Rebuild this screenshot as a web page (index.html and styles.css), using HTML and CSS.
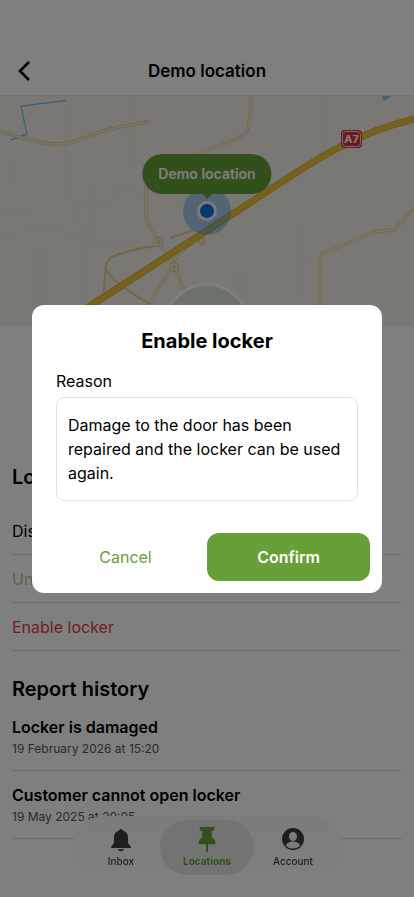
FILE: index.html
```html
<!DOCTYPE html>
<html lang="en">
<head>
    <meta charset="UTF-8">
    <meta name="viewport" content="width=device-width, initial-scale=1.0">
    <title>Demo location</title>
    <link rel="stylesheet" href="styles.css">
</head>
<body>
    <header class="header">
        <button class="back-button" aria-label="Back">
            <svg width="24" height="24" viewBox="0 0 24 24" fill="none" stroke="currentColor" stroke-width="2.6"><path d="M17 3 8 12l9 9"/></svg>
        </button>
        <h1>Demo location</h1>
    </header>

    <main>
        <div class="map">
            <svg class="map-canvas" viewBox="0 0 414 230" preserveAspectRatio="xMidYMid slice" fill="none">
                <!-- small streets -->
                <g stroke="#ece8e3" stroke-width="1">
                    <path d="M66 0v62L74 120l8 14v96M134 0v70M94 90l-4 60M14 60v30M72 108h38M115 85l-3 25M118 92l28 6M0 137l60-3 30 14 60 4M40 150v80M85 150v70M328 0l-4 60M302 130v70M300 166l14-4M240 170v60M0 118h30"/>
                </g>
                <!-- water -->
                <g stroke="#88bfe0" stroke-width="1.4">
                    <path d="M66 4.500 21 10l6 28-16 6"/>
                    <path d="M383 0l1 4 6-4z" fill="#88cfe8"/>
                </g>
                <!-- secondary roads -->
                <g stroke="#e0d39c" stroke-width="3.400" stroke-linejoin="round">
                    <path d="M0 36c20 4 40 13 60 12s30-10 50-15l40-8"/>
                    <path d="M251 0c0 15-2 28-4 35s-34 16-52 24"/>
                    <path d="M146 90v24c0 12 2 14 6 20l5 9M160 149l14 20M150 208l12-22 9-12h5l12 30M173 165l12-13 16-10"/>
                    <path d="M414 112l-20 22-20 2-48 20c-8 4-6 6-6 14v60"/>
                </g>
                <g stroke="#f6f0da" stroke-width="1.600" stroke-linejoin="round">
                    <path d="M0 36c20 4 40 13 60 12s30-10 50-15l40-8"/>
                    <path d="M251 0c0 15-2 28-4 35s-34 16-52 24"/>
                    <path d="M146 90v24c0 12 2 14 6 20l5 9M160 149l14 20M150 208l12-22 9-12h5l12 30M173 165l12-13 16-10"/>
                    <path d="M414 112l-20 22-20 2-48 20c-8 4-6 6-6 14v60"/>
                </g>
                <!-- slip roads -->
                <path d="M154 150c-18 3-32 6-42 11-8 5-6 10-7 20l-2 24M106 173c6 10 14 18 44 35M170 142l24-8" stroke="#e6cf94" stroke-width="2"/>
                <g stroke="#e0d39c" stroke-width="1.400" fill="#f6f0da">
                    <circle cx="158" cy="146" r="4.500"/>
                    <circle cx="174" cy="171" r="4.500"/>
                    <circle cx="202" cy="145" r="3"/>
                    <circle cx="158" cy="146" r="1.500"/>
                    <circle cx="174" cy="171" r="1.500"/>
                </g>
                <!-- motorway A7 -->
                <path d="M84 214 248 108C298 76 344 40 414 23" stroke="#d0a83a" stroke-width="7"/>
                <path d="M84 214 248 108C298 76 344 40 414 23" stroke="#ecc437" stroke-width="5.500"/>
                <rect x="341" y="34" width="21" height="18" rx="4" fill="#d8303f"/>
                <rect x="342.500" y="35.500" width="18" height="15" rx="3" stroke="#f6dede"/>
                <text class="road-sign" x="351.500" y="47" text-anchor="middle">A7</text>
                <!-- location accuracy and position -->
                <circle cx="207" cy="115" r="24" fill="#3c8ce6" fill-opacity="0.4"/>
                <circle cx="207" cy="115" r="10" fill="#f4f4f8"/>
                <circle cx="207" cy="115" r="7" fill="#0a6ee0"/>
            </svg>
            <div class="marker-label">Demo location</div>
        </div>

        <section class="profile">
            <div class="avatar"></div>
        </section>

        <section class="section">
            <h2>Locker 1</h2>
            <button class="row">Display</button>
            <button class="row row-unlock" disabled>Unlock</button>
            <button class="row row-danger">Enable locker</button>
        </section>

        <section class="section">
            <h2 class="history-title">Report history</h2>
            <article class="report">
                <h3>Locker is damaged</h3>
                <p>19 February 2026 at 15:20</p>
            </article>
            <article class="report">
                <h3>Customer cannot open locker</h3>
                <p>19 May 2025 at 20:05</p>
            </article>
        </section>
    </main>

    <nav class="tab-bar">
        <a class="tab" href="#inbox">
            <svg width="26" height="26" viewBox="0 0 26 26" fill="currentColor"><path d="M13 2c1 0 1.700.6 1.900 1.500 3.200.9 5.100 3.500 5.100 7v4c0 2 .8 3 2.200 4.300.5.500.8 1 .8 1.500 0 .5-.3.700-.8.700H3.800c-.5 0-.8-.2-.8-.7 0-.5.300-1 .8-1.500C5.200 17.500 6 16.500 6 14.500v-4c0-3.500 1.900-6.100 5.100-7C11.300 2.600 12 2 13 2zM9.800 22.300h6.400c-.4 1.200-1.600 2-3.200 2s-2.800-.8-3.200-2z"/></svg>
            <span>Inbox</span>
        </a>
        <a class="tab tab-active" href="#locations">
            <svg width="26" height="26" viewBox="0 0 26 26" fill="currentColor"><path d="M6.500 0h13c.5 0 .8.400.8.800v1.400c0 1-1.300 1.500-2.800 2.300l.7 6.300c2 1 3.300 3 3.300 5.500 0 .6-.3.900-.9.900h-6.600V23c0 1.500-.4 3-1 3s-1-1.500-1-3v-5.800H5.400c-.6 0-.9-.3-.9-.9 0-2.500 1.300-4.500 3.300-5.500l.7-6.300C7 3.700 5.700 3.200 5.700 2.200V.8c0-.4.300-.8.800-.8z"/></svg>
            <span>Locations</span>
        </a>
        <a class="tab" href="#account">
            <svg width="26" height="26" viewBox="0 0 26 26"><circle cx="13" cy="12" r="11" fill="currentColor"/><ellipse cx="13" cy="9.500" rx="4" ry="4.500" fill="#f6f6f6"/><path d="M5.800 18.500c1-3 4-4 7.200-4s6.200 1 7.200 4c-1.700 2-4.200 3-7.200 3s-5.500-1-7.200-3z" fill="#f6f6f6"/></svg>
            <span>Account</span>
        </a>
    </nav>

    <div class="overlay">
        <form class="modal" role="dialog" aria-labelledby="modal-title">
            <div class="modal-body">
                <h2 id="modal-title">Enable locker</h2>
                <label for="reason">Reason</label>
                <textarea id="reason" rows="3">Damage to the door has been repaired and the locker can be used again.</textarea>
            </div>
            <div class="modal-actions">
                <button type="button" class="btn">Cancel</button>
                <button type="submit" class="btn btn-primary">Confirm</button>
            </div>
        </form>
    </div>
</body>
</html>
```
FILE: styles.css
```css
* {
    box-sizing: border-box;
}

body {
    margin: 0;
    min-height: 100vh;
    background: #fff;
    color: #000;
    font-family: Inter, "Liberation Sans", Arial, sans-serif;
    font-size: 16px;
    line-height: 24px;
}

h1, h2, h3, p {
    margin: 0;
}

button, textarea {
    font: inherit;
    color: inherit;
}

button {
    padding: 0;
    border: none;
    background: none;
    cursor: pointer;
}

.header {
    display: grid;
    grid-template-columns: 48px 1fr 48px;
    align-items: center;
    padding-top: 47px;
    border-bottom: 1px solid #e4e4e4;
}

.header h1 {
    font-size: 17px;
    font-weight: 600;
    line-height: 48px;
    text-align: center;
}

.back-button {
    display: flex;
    justify-content: center;
    align-items: center;
    height: 48px;
}

.map {
    position: relative;
    height: 230px;
    background: #f5f0ea;
}

.map-canvas {
    display: block;
    width: 100%;
    height: 100%;
}

.road-sign {
    font-size: 11px;
    font-weight: 700;
    fill: #fff;
}

.marker-label {
    position: absolute;
    top: 58px;
    left: 50%;
    transform: translateX(-50%);
    padding: 8px 16px;
    border-radius: 20px;
    background: #67a038;
    color: #fff;
    font-size: 14px;
    font-weight: 600;
    white-space: nowrap;
}

.marker-label::after {
    content: "";
    position: absolute;
    top: 100%;
    left: 50%;
    margin-left: -5px;
    border: 5px solid transparent;
    border-top-color: #67a038;
    border-bottom: none;
}

.profile {
    position: relative;
    display: flex;
    justify-content: center;
    height: 137px;
}

.avatar {
    width: 88px;
    height: 88px;
    margin-top: -43px;
    border: 3px solid #fff;
    border-radius: 50%;
    background: #d9e4d6;
}

.section {
    padding: 0 12px;
}

.section h2 {
    font-size: 20px;
    font-weight: 600;
    line-height: 28px;
}

.section h2:not(.history-title) {
    margin-bottom: 16px;
}

.history-title {
    margin-top: 24px;
}

.row {
    display: block;
    width: 100%;
    height: 48px;
    border-bottom: 1px solid #dadada;
    text-align: left;
}

.row-unlock {
    color: #b3ca9f;
}

.row-danger {
    color: #e5384a;
}

.report {
    padding: 12px 0 11px;
    border-bottom: 1px solid #dadada;
}

.report h3 {
    font-size: 16px;
    font-weight: 600;
}

.report p {
    color: #555;
    font-size: 12px;
    line-height: 20px;
}

.tab-bar {
    position: fixed;
    bottom: 18px;
    left: 50%;
    transform: translateX(-50%);
    display: flex;
    padding: 4px 10px;
    border-radius: 32px;
    background: linear-gradient(#f8f8f8, #fff);
}

.tab {
    display: flex;
    flex-direction: column;
    align-items: center;
    gap: 1px;
    width: 78px;
    padding: 7px 0;
    border-radius: 28px;
    color: #3c3c3c;
    font-size: 10px;
    font-weight: 500;
    line-height: 14px;
    text-decoration: none;
}

.tab-active {
    width: 94px;
    background: #e6e6e6;
    color: #67a038;
    font-weight: 700;
}

.overlay {
    position: fixed;
    inset: 0;
    display: flex;
    align-items: center;
    justify-content: center;
    padding: 32px;
    background: rgba(0, 0, 0, 0.5);
}

.modal {
    width: 100%;
    max-width: 420px;
    border-radius: 12px;
    background: #fff;
}

.modal-body {
    display: flex;
    flex-direction: column;
    padding: 24px 24px 32px;
}

.modal-body h2 {
    margin-bottom: 16px;
    font-size: 20px;
    font-weight: 700;
    line-height: 24px;
    text-align: center;
}

.modal-body label {
    margin-bottom: 4px;
}

.modal-body textarea {
    padding: 15px 11px;
    border: 1px solid #e2e2e2;
    border-radius: 8px;
    outline: none;
    resize: none;
    overflow: hidden;
}

.modal-actions {
    display: flex;
    padding: 0 12px 12px;
}

.btn {
    flex: 1;
    height: 48px;
    border-radius: 12px;
    color: #67a038;
}

.btn-primary {
    background: #67a038;
    color: #fff;
    font-weight: 600;
}
```
